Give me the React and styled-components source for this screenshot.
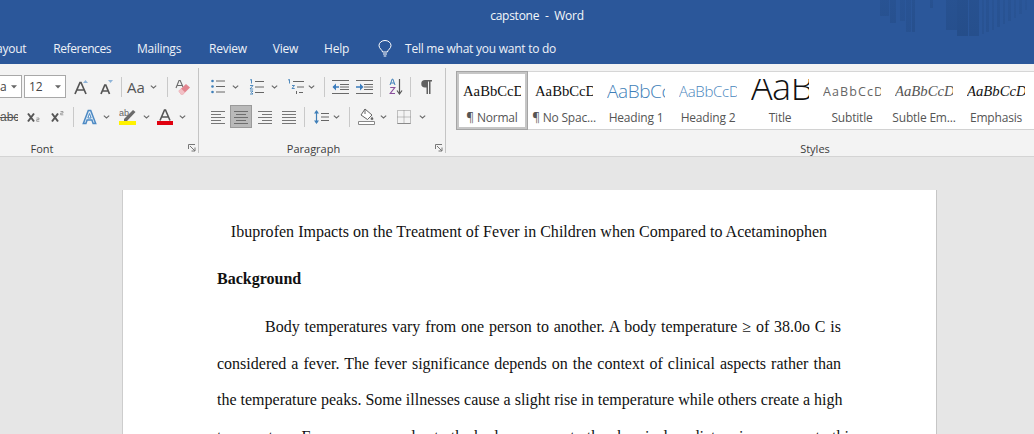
import React from "react";
import styled, { createGlobalStyle } from "styled-components";

const Global = createGlobalStyle`
  html, body { margin: 0; padding: 0; background: #e6e6e6; }
  #root { width: 1034px; height: 434px; overflow: hidden; }
`;

const UI = `"Open Sans", "Noto Sans", sans-serif`;
const SERIF = `"Liberation Serif", serif`;

const Window = styled.div`
  width: 1034px;
  height: 434px;
  overflow: hidden;
  display: flex;
  flex-direction: column;
  background: #e6e6e6;
  font-family: ${UI};
`;

const Header = styled.header`
  position: relative;
  height: 64px;
  flex: none;
  background: #2b579a;
  color: #fff;
  display: flex;
  flex-direction: column;
`;

const Title = styled.div`
  height: 32px;
  line-height: 32px;
  text-align: center;
  padding-left: 40px;
  font-size: 12px;
  white-space: pre;
  color: #f4f7fb;
  letter-spacing: -0.25px;
`;

const Tabs = styled.nav`
  display: flex;
  align-items: center;
  height: 32px;
  margin-left: -10px;
  font-size: 12px;
  color: #eef2f8;
  letter-spacing: -0.25px;
`;

const Tab = styled.span`
  margin-left: ${(p) => p.$ml}px;
  white-space: nowrap;
  letter-spacing: ${(p) => p.$ls ?? -0.25}px;
`;

const Bars = styled.svg`
  position: absolute;
  top: 0;
  right: 0;
`;

const Ribbon = styled.section`
  height: 92px;
  flex: none;
  display: flex;
  background: #f3f3f3;
  border-bottom: 1px solid #d4d4d4;
`;

const Group = styled.div`
  position: relative;
  flex: none;
  width: ${(p) => p.$w}px;
  display: flex;
  flex-direction: column;
  &::after {
    content: "";
    display: ${(p) => (p.$last ? "none" : "block")};
    position: absolute;
    right: 0;
    top: 4px;
    bottom: 3px;
    width: 1px;
    background: #c4c4c4;
  }
`;

const Row = styled.div`
  display: flex;
  align-items: center;
  height: ${(p) => p.$h}px;
  margin-top: ${(p) => p.$mt || 0}px;
`;

const GroupLabel = styled.div`
  position: absolute;
  left: 0;
  right: 0;
  bottom: -1px;
  height: 17px;
  line-height: 17px;
  font-size: 11px;
  color: #3c3c3c;
  text-align: center;
  padding-left: ${(p) => p.$pl || 0}px;
  padding-right: ${(p) => p.$pr || 0}px;
  box-sizing: border-box;
`;

const Launcher = styled.svg`
  position: absolute;
  right: 3px;
  bottom: 4px;
`;

const Slot = styled.span`
  flex: none;
  display: inline-flex;
  align-items: center;
  justify-content: center;
  width: ${(p) => p.$w}px;
  height: ${(p) => p.$h || 22}px;
  margin-left: ${(p) => p.$ml || 0}px;
  background: ${(p) => (p.$active ? "#b9b9b9" : "transparent")};
  box-shadow: ${(p) => (p.$active ? "inset 0 0 0 1px #9a9a9a" : "none")};
`;

const CaseLabel = styled(Slot)`
  font-size: 15px;
  color: #555;
`;

const Sep = styled.span`
  flex: none;
  width: 1px;
  height: 20px;
  margin-left: ${(p) => p.$ml}px;
  background: #c9c9c9;
`;

const Combo = styled.span`
  flex: none;
  box-sizing: border-box;
  display: flex;
  align-items: center;
  justify-content: space-between;
  width: ${(p) => p.$w}px;
  height: 23px;
  margin-left: ${(p) => p.$ml || 0}px;
  padding: 0 4px;
  background: #fff;
  border: 1px solid #a8a8a8;
  font-size: 12px;
  color: #444;
`;

const ClippedName = styled.span`
  margin-left: 3px;
`;

const Gallery = styled.div`
  display: flex;
  box-sizing: border-box;
  height: 59px;
  margin: 7px 0 0 10px;
  background: #fff;
  border-top: 1px solid #d6d6d6;
  border-bottom: 1px solid #d2d2d2;
`;

const StyleItem = styled.div`
  flex: none;
  box-sizing: border-box;
  width: 72px;
  height: ${(p) => (p.$selected ? "59px" : "57px")};
  margin-top: ${(p) => (p.$selected ? "-1px" : "0")};
  display: flex;
  flex-direction: column;
  align-items: center;
  border: ${(p) => (p.$selected ? "3px solid #c6c6c6" : "none")};
  outline: ${(p) => (p.$selected ? "1px solid #a5a5a5" : "none")};
  outline-offset: -1px;
  padding-top: ${(p) => (p.$selected ? "2px" : "4px")};
`;

const Sample = styled.div`
  box-sizing: border-box;
  width: 58px;
  height: ${(p) => 31 - (p.$top || 0)}px;
  margin-top: ${(p) => p.$top || 0}px;
  flex: none;
  overflow: hidden;
  white-space: nowrap;
  line-height: ${(p) => p.$lh || 31}px;
  font-family: ${(p) => p.$font};
  font-size: ${(p) => p.$size}px;
  font-style: ${(p) => (p.$italic ? "italic" : "normal")};
  font-weight: ${(p) => p.$weight || 400};
  color: ${(p) => p.$color};
  letter-spacing: ${(p) => p.$ls || 0}px;
`;

const StyleName = styled.div`
  font-size: 12px;
  line-height: 18px;
  margin-top: 2px;
  color: #555;
  letter-spacing: -0.2px;
  white-space: nowrap;
`;

const Canvas = styled.main`
  flex: 1;
  min-height: 0;
  overflow: hidden;
  background: #e6e6e6;
  padding: 33px 0 0 122px;
`;

const Page = styled.article`
  box-sizing: border-box;
  width: 815px;
  height: 400px;
  padding: 27px 95px 0 94px;
  background: #fff;
  border-left: 1px solid #cdcdcd;
  border-right: 1px solid #c6c6c6;
  font-family: ${SERIF};
  font-size: 16px;
  color: #111;
`;

const Heading = styled.div`
  text-align: center;
  height: 30px;
  line-height: 30px;
  margin-bottom: 17px;
  letter-spacing: 0.02px;
`;

const Sub = styled.div`
  font-weight: 700;
  height: 30px;
  line-height: 30px;
  margin-bottom: 15px;
`;

const Line = styled.div`
  height: 36.6px;
  line-height: 36.6px;
  text-align: justify;
  text-align-last: justify;
  white-space: nowrap;
  text-indent: ${(p) => (p.$indent ? "48px" : "0")};
`;

/* ---------- icons ---------- */
const C = { g: "#5f5f5f", l: "#7a7a7a", b: "#3f7fb8", lb: "#8fb4d8" };

const Chevron = ({ ml = 0, c = "#6a6a6a" }) => (
  <Slot $w={7} $ml={ml}>
    <svg width="7" height="4" viewBox="0 0 7 4" fill="none">
      <path d="M.8.6 3.5 3 6.2.6" stroke={c} strokeWidth="1.1" />
    </svg>
  </Slot>
);

const Down = () => (
  <svg width="6" height="4" viewBox="0 0 6 4">
    <path d="M0 .2h6L3 3.600z" fill="#666" />
  </svg>
);

const Grow = ({ big }) => (
  <svg width="15" height="16" viewBox="0 0 15 16" fill="none">
    <path
      d={big ? "M1 15 6 3.5h1L12 15M3 11h8" : "M2 15 5.8 6h1L10.5 15M3.6 12h5.6"}
      stroke="#555"
      strokeWidth="1.7"
    />
    <path d={big ? "M9 4 11.5 1 14 4z" : "M9 1h5l-2.5 3z"} fill={C.lb} />
  </svg>
);

const Eraser = () => (
  <svg width="16" height="16" viewBox="0 0 16 16" fill="none">
    <path d="M1 9 4 1.5h1.2L8 8M2.3 6.500h4.500" stroke="#6a6a6a" strokeWidth="1.1" />
    <path d="M3.500 12 11 5l4 3.500-7 7H6z" fill="#e2858f" />
    <path d="M3.500 12 6 9.500l4 3.700L8 15.500H6z" fill="#f1c0c5" />
  </svg>
);

const Strike = () => (
  <svg width="18" height="12" viewBox="0 0 18 12">
    <text x="0" y="10" fontFamily="Liberation Sans" fontSize="12" fill="#555">abc</text>
    <path d="M0 6.500h18" stroke="#555" strokeWidth="1" />
  </svg>
);

const Script = ({ sup }) => (
  <svg width="13" height="13" viewBox="0 0 13 13" fill="none">
    <path d="M1 3.500 7 11.500M7 3.500 1 11.500" stroke="#555" strokeWidth="2" />
    <path
      d={sup ? "M9.500 1.500h2.500v1.600H9.700v1.700h2.600" : "M9.500 8h2.500v1.600H9.700v1.700h2.600"}
      stroke="#8a8a8a"
      strokeWidth=".8"
    />
  </svg>
);

const TextEffect = () => (
  <svg width="15" height="16" viewBox="0 0 15 16" fill="none">
    <path d="M1.300 14.500 6.300 1.500h2.400l5 13h-2.600l-1.200-3.400H5.100l-1.200 3.400z" stroke="#4d8ac4" strokeWidth="1.500" fill="#dbe8f4" />
    <path d="M5.900 9h3.200L7.500 4.500z" fill="#fff" stroke="#4d8ac4" />
  </svg>
);

const Highlight = () => (
  <svg width="18" height="17" viewBox="0 0 18 17" fill="none">
    <text x="0" y="8" fontFamily="Liberation Sans" fontSize="9" fill="#666">ab</text>
    <path d="M5 11 14 2l2.500 2-8.500 9H5z" fill="#6a6a6a" />
    <rect x="0" y="13" width="17" height="4" fill="#fff200" />
  </svg>
);

const FontColor = () => (
  <svg width="16" height="16" viewBox="0 0 16 16" fill="none">
    <path d="M3 11.500 7.500 1h1L13 11.500M5 8h6" stroke="#555" strokeWidth="1.600" />
    <rect x="0" y="12" width="16" height="4" fill="#e0000f" />
  </svg>
);

const Bullets = () => (
  <svg width="15" height="15" viewBox="0 0 15 15" fill="none">
    <circle cx="1.500" cy="2" r="1.300" fill={C.b} />
    <circle cx="1.500" cy="7.500" r="1.300" fill={C.b} />
    <circle cx="1.500" cy="13" r="1.300" fill={C.b} />
    <path d="M5 2h9M5 7.500h9M5 13h9" stroke="#666" />
  </svg>
);

const Numbers = () => (
  <svg width="15" height="16" viewBox="0 0 15 16" fill="none">
    <path d="M1 1 2.500.5V4.500M1 6.500h3L1 10h3.200M1 12h3l-1.500 1.500L4 15H1" stroke={C.b} strokeWidth=".9" />
    <path d="M6 2.500h9M6 8h9M6 13.500h9" stroke="#666" />
  </svg>
);

const Multi = () => (
  <svg width="17" height="16" viewBox="0 0 17 16" fill="none">
    <path d="M1 1 2.500.5V4.500M5 6.500h2.500L5 9.500h2.700" stroke={C.b} strokeWidth=".9" />
    <path d="M9.500 12v3" stroke="#666" />
    <path d="M6 2.500h11M10 8h7M12 13.500h4" stroke="#666" />
  </svg>
);

const Indent = ({ inc }) => (
  <svg width="17" height="14" viewBox="0 0 17 14" fill="none">
    <path d="M0 .5h17M0 13.500h17M8 4.500h9M8 7h9M8 9.500h9" stroke="#6a6a6a" />
    <path d={inc ? "M0 7h5" : "M1.500 7H7"} stroke="#3b7cbd" strokeWidth="1.500" />
    <path d={inc ? "M4 3.500 7.500 7 4 10.500z" : "M4 3.500.5 7 4 10.500z"} fill="#3b7cbd" />
  </svg>
);

const Sort = () => (
  <svg width="14" height="17" viewBox="0 0 14 17" fill="none">
    <path d="M1 7 3.200 1h.6L6 7M2 5h3" stroke={C.b} strokeWidth="1" />
    <path d="M1.200 9.500h4.600L1.200 15.500h4.800" stroke="#8a4f9c" strokeWidth="1.100" />
    <path d="M10.500 1v14" stroke="#555" strokeWidth="1.200" />
    <path d="M8 12.500 10.500 16 13 12.500" stroke="#555" strokeWidth="1.200" />
  </svg>
);

const Pilcrow = () => (
  <svg width="11" height="14" viewBox="0 0 11 14">
    <path d="M4 0h7v1.500H9.500V14H8V1.500H7V14H5.500V7.500H4A3.700 3.700 0 0 1 4 0z" fill="#606060" />
  </svg>
);

const Lines = ({ kind }) => {
  const rows = [1, 4, 7, 10, 13];
  const short = kind === "justify" ? [14, 14, 14, 14, 14] : [14, 10, 14, 10, 14];
  return (
    <svg width="14" height="14" viewBox="0 0 14 14" fill="none">
      {rows.map((y, i) => {
        const w = short[i];
        const x = kind === "right" ? 14 - w : kind === "center" ? (14 - w) / 2 : 0;
        return <path key={y} d={`M${x} ${y + 0.5}h${w}`} stroke={kind === "center" ? "#6d6d6d" : "#767676"} />;
      })}
    </svg>
  );
};

const Spacing = () => (
  <svg width="16" height="16" viewBox="0 0 16 16" fill="none">
    <path d="M3.500 2v12" stroke={C.b} strokeWidth="1.200" />
    <path d="M1 4.500 3.500 1 6 4.500zM1 11.500 3.500 15 6 11.500z" fill={C.b} />
    <path d="M8 4.500h8M8 8h8M8 11.500h8" stroke="#666" />
  </svg>
);

const Shading = () => (
  <svg width="17" height="17" viewBox="0 0 17 17" fill="none">
    <path d="M7 1 14 7l-4.500 4.500L3 7z" stroke="#666" fill="#fff" />
    <path d="M7 1v5" stroke="#666" />
    <path d="M14 8.500l1.600 2.500-1.600 1.200-1.600-1.200z" fill="#666" />
    <path d="M.5 13.500h16v3H.5z" stroke="#888" fill="#fff" />
  </svg>
);

const Borders = () => (
  <svg width="14" height="14" viewBox="0 0 14 14" fill="none">
    <path d="M.5.5h13v13H.5zM7 .5v13M.5 7h13" stroke="#8a8a8a" strokeDasharray="1 1" />
    <path d="M.5 13.500h13" stroke="#8a8a8a" />
  </svg>
);

const LaunchIcon = () => (
  <Launcher width="8" height="8" viewBox="0 0 8 8" fill="none">
    <path d="M.5 5V.5H7M2 2l5 5M7 3.500V7H3.500" stroke="#777" />
  </Launcher>
);

const TitleBars = () => {
  const bars = [
    [10, 9, 16, .35], [20, 6, 23, .4], [30, 5, 21, .3], [36, 5, 32, .35], [42, 3, 32, .45],
    [60, 3, 8, .4], [76, 11, 30, .45], [87, 11, 36, .6], [99, 10, 36, .5], [112, 2, 34, .3],
    [116, 3, 32, .35], [122, 2, 30, .3], [127, 3, 27, .35], [133, 2, 24, .3], [138, 3, 21, .3],
    [144, 2, 18, .25], [149, 3, 14, .25], [155, 2, 10, .2],
  ];
  return (
    <Bars width="164" height="40" viewBox="0 0 164 40">
      <defs>
        <linearGradient id="fade" x1="0" x2="0" y1="0" y2="1">
          <stop offset="0" stopColor="#21477f" stopOpacity=".75" />
          <stop offset="1" stopColor="#21477f" stopOpacity="1" />
        </linearGradient>
      </defs>
      {bars.map(([x, w, h, o]) => (
        <rect key={x} x={x} y="0" width={w} height={h} fill="url(#fade)" opacity={o} />
      ))}
    </Bars>
  );
};

const styles = [
  { name: "¶ Normal", selected: true, font: SERIF, size: 14.7, color: "#111" },
  { name: "¶ No Spac...", font: SERIF, size: 14.7, color: "#111" },
  { name: "Heading 1", font: UI, size: 19, weight: 300, color: "#3f7fb8", ls: -0.4 },
  { name: "Heading 2", font: UI, size: 15, weight: 300, color: "#4a86bd", ls: -0.3 },
  { name: "Title", font: UI, size: 36, weight: 300, color: "#111", ls: -0.5, top: 3, lh: 15, text: "AaB" },
  { name: "Subtitle", font: UI, size: 12.5, color: "#666", ls: 1.1 },
  { name: "Subtle Em...", font: SERIF, size: 14.7, italic: true, color: "#555" },
  { name: "Emphasis", font: SERIF, size: 14.7, italic: true, color: "#111" },
];

export default function App() {
  return (
    <Window>
      <Global />
      <Header>
        <TitleBars />
        <Title>capstone  -  Word</Title>
        <Tabs>
          <Tab $ml={0}>Layout</Tab>
          <Tab $ml={27} $ls={-0.45}>References</Tab>
          <Tab $ml={26}>Mailings</Tab>
          <Tab $ml={28}>Review</Tab>
          <Tab $ml={26}>View</Tab>
          <Tab $ml={26}>Help</Tab>
          <Slot $w={16} $ml={28}>
            <svg width="14" height="17" viewBox="0 0 14 17" fill="none">
              <path d="M4.600 12C4.200 9.800 1 8.500 1 5.500a6 5 0 0 1 12 0C13 8.500 9.800 9.800 9.400 12z" stroke="#fff" />
              <path d="M5 14h4M5.700 16h2.600" stroke="#fff" />
            </svg>
          </Slot>
          <Tab $ml={12}>Tell me what you want to do</Tab>
        </Tabs>
      </Header>

      <Ribbon>
        <Group $w={199}>
          <Row $h={23} $mt={11}>
            <Combo $w={30} $ml={-8}>
              <ClippedName>a</ClippedName>
              <Down />
            </Combo>
            <Combo $w={42} $ml={2}>
              12
              <Down />
            </Combo>
            <Slot $w={15} $ml={8}><Grow big /></Slot>
            <Slot $w={15} $ml={10}><Grow /></Slot>
            <Sep $ml={7} />
            <CaseLabel $w={18} $ml={5}>Aa</CaseLabel>
            <Chevron ml={5} />
            <Sep $ml={10} />
            <Slot $w={16} $ml={7}><Eraser /></Slot>
          </Row>
          <Row $h={23} $mt={7}>
            <Slot $w={18} $ml={0}><Strike /></Slot>
            <Slot $w={13} $ml={9}><Script /></Slot>
            <Slot $w={13} $ml={11}><Script sup /></Slot>
            <Sep $ml={9} />
            <Slot $w={15} $ml={8}><TextEffect /></Slot>
            <Chevron ml={6} />
            <Slot $w={18} $ml={9}><Highlight /></Slot>
            <Chevron ml={6} />
            <Slot $w={16} $ml={7}><FontColor /></Slot>
            <Chevron ml={6} />
          </Row>
          <GroupLabel $pr={115}>Font</GroupLabel>
          <LaunchIcon />
        </Group>

        <Group $w={247}>
          <Row $h={23} $mt={11}>
            <Slot $w={15} $ml={12}><Bullets /></Slot>
            <Chevron ml={6} />
            <Slot $w={15} $ml={10}><Numbers /></Slot>
            <Chevron ml={7} />
            <Slot $w={17} $ml={9}><Multi /></Slot>
            <Chevron ml={4} />
            <Sep $ml={9} />
            <Slot $w={17} $ml={7}><Indent /></Slot>
            <Slot $w={17} $ml={7}><Indent inc /></Slot>
            <Sep $ml={7} />
            <Slot $w={14} $ml={8}><Sort /></Slot>
            <Sep $ml={7} />
            <Slot $w={11} $ml={10}><Pilcrow /></Slot>
          </Row>
          <Row $h={23} $mt={7}>
            <Slot $w={14} $ml={12}><Lines kind="left" /></Slot>
            <Slot $w={22} $h={23} $ml={5} $active><Lines kind="center" /></Slot>
            <Slot $w={14} $ml={6}><Lines kind="right" /></Slot>
            <Slot $w={14} $ml={10}><Lines kind="justify" /></Slot>
            <Sep $ml={8} />
            <Slot $w={16} $ml={8}><Spacing /></Slot>
            <Chevron ml={4} />
            <Sep $ml={9} />
            <Slot $w={17} $ml={8}><Shading /></Slot>
            <Chevron ml={5} />
            <Slot $w={14} $ml={10}><Borders /></Slot>
            <Chevron ml={8} />
          </Row>
          <GroupLabel $pr={18}>Paragraph</GroupLabel>
          <LaunchIcon />
        </Group>

        <Group $w={588} $last>
          <Gallery>
            {styles.map((s) => (
              <StyleItem key={s.name} $selected={s.selected}>
                <Sample
                  $font={s.font}
                  $size={s.size}
                  $italic={s.italic}
                  $weight={s.weight}
                  $color={s.color}
                  $ls={s.ls}
                  $top={s.top}
                  $lh={s.lh}
                >
                  {s.text || "AaBbCcDdEe"}
                </Sample>
                <StyleName>{s.name}</StyleName>
              </StyleItem>
            ))}
          </Gallery>
          <GroupLabel $pl={150}>Styles</GroupLabel>
        </Group>
      </Ribbon>

      <Canvas>
        <Page>
          <Heading>Ibuprofen Impacts on the Treatment of Fever in Children when Compared to Acetaminophen</Heading>
          <Sub>Background</Sub>
          <Line $indent>Body temperatures vary from one person to another. A body temperature ≥ of 38.0o C is</Line>
          <Line>considered a fever. The fever significance depends on the context of clinical aspects rather than</Line>
          <Line>the temperature peaks. Some illnesses cause a slight rise in temperature while others create a high</Line>
          <Line>temperature. For some cases, due to the body response to the chemical mediators in response to this</Line>
        </Page>
      </Canvas>
    </Window>
  );
}
